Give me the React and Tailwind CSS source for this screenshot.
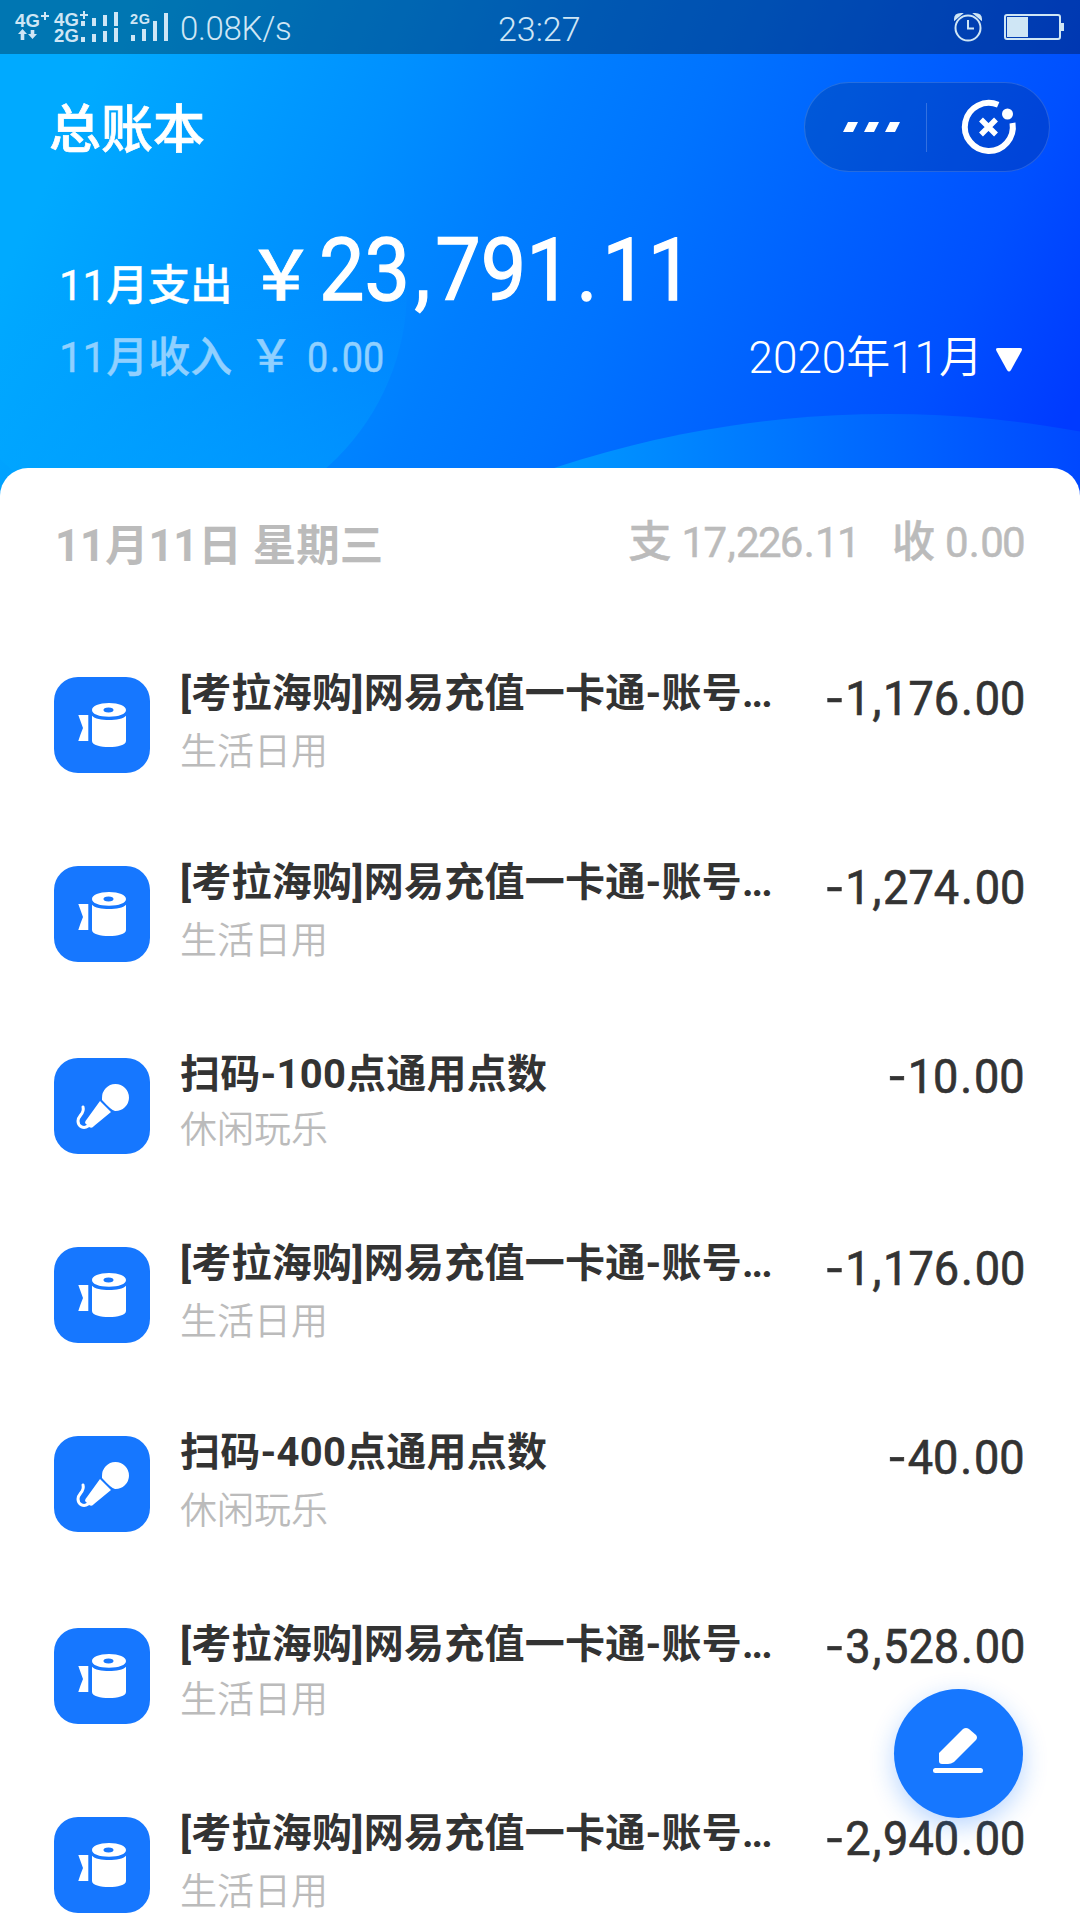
const FONTS = "font-['Roboto','Noto_Sans_CJK_SC',sans-serif]";

function Num({ value, sep }) {
  return value.split(/([,.-])/).map((p, i) => {
    if (p === "-") return <span key={i} className="mr-[3px] inline-block origin-right scale-x-[1.25]">{p}</span>;
    if (p === "," || p === ".") return <span key={i} className={sep}>{p}</span>;
    return p;
  });
}

function RollIcon() {
  return (
    <svg width="96" height="96" viewBox="0 0 96 96" fill="#fff">
      <path d="M24.300 38H34.300V64H24.300Q26.500 57 29 51Q26.500 44 24.300 38Z" />
      <path d="M38 38.700C43 44.500 67 44.500 72 38.700V64C72 72 38 72 38 64Z" />
      <path fillRule="evenodd" d="M55 26C65 26 72 29 72 33S65 39.700 55 39.700S38 37 38 33S45 26 55 26ZM54.500 30.500C51 30.500 49.500 31.500 49.500 33S51 35.500 54.500 35.500S59.500 34.500 59.500 33S58 30.500 54.500 30.500Z" />
    </svg>
  );
}

function MicIcon() {
  return (
    <svg width="96" height="96" viewBox="0 0 96 96" fill="#fff">
      <path d="M48 40A13.500 13.500 0 1 1 61 53Q58 53 48 42Z" />
      <path d="M46 43L57 54L40 68Q38 71 35 69L31 65Q31 63 33 61Z" />
      <path d="M29 49C31 56 24 57 24 63C24 69 30 71 34 68" fill="none" stroke="#fff" strokeWidth="3" strokeLinecap="round" />
    </svg>
  );
}

const KAOLA = (
  <>
    [考拉海购]网易充值一卡通-账号<span className="tracking-[-2px]">...</span>
  </>
);
const NORMAL = { sub: "mt-[9px]", amount: "mt-[-8px]" };
const TIGHT = { sub: "mt-[6px]", amount: "mt-[-11px]" };
const rows = [
  { title: KAOLA, sub: "生活日用", amount: "-1,176.00", Icon: RollIcon, h: "h-[189px]", gap: NORMAL },
  { title: KAOLA, sub: "生活日用", amount: "-1,274.00", Icon: RollIcon, h: "h-[192px]", gap: NORMAL },
  { title: "扫码-100点通用点数", sub: "休闲玩乐", amount: "-10.00", Icon: MicIcon, h: "h-[189px]", gap: TIGHT },
  { title: KAOLA, sub: "生活日用", amount: "-1,176.00", Icon: RollIcon, h: "h-[189px]", gap: NORMAL },
  { title: "扫码-400点通用点数", sub: "休闲玩乐", amount: "-40.00", Icon: MicIcon, h: "h-[192px]", gap: NORMAL },
  { title: KAOLA, sub: "生活日用", amount: "-3,528.00", Icon: RollIcon, h: "h-[189px]", gap: TIGHT },
  { title: KAOLA, sub: "生活日用", amount: "-2,940.00", Icon: RollIcon, h: "h-[189px]", gap: NORMAL },
];

function StatusBar() {
  return (
    <div className="flex h-[54px] items-center bg-black/30 text-[#cfe6f5]">
      <svg className="shrink-0" width="176" height="54" viewBox="0 0 176 54" fill="currentColor">
        <g fontFamily="Liberation Sans" fontWeight="bold">
          <text x="15" y="27" fontSize="18.500" textLength="25">4G</text>
          <text x="54" y="26" fontSize="18.500" textLength="25">4G</text>
          <text x="54" y="42" fontSize="18.500" textLength="25">2G</text>
          <text x="130" y="24" fontSize="14.500" textLength="20">2G</text>
        </g>
        <path d="M41 16h8M45 12v8M80 15h8M84 11v8" stroke="currentColor" strokeWidth="2" />
        <path d="M18 34l4.500-5l4.500 5h-2.700v6h-3.600v-6zM28 34l4.500 5l4.500-5h-2.700v-4h-3.600v4z" />
        <path d="M81 21h4v5h-4zM92 18h4v8h-4zM103 15h4v11h-4zM114 12h4v14h-4zM81 37h4v5h-4zM92 34h4v8h-4zM103 31h4v11h-4zM114 28h4v14h-4zM131 35h4v6h-4zM142 29h4v12h-4zM153 21h4v20h-4zM164 13h4v28h-4z" />
      </svg>
      <span className="w-[322px] pl-[4px] pt-[3px] text-[33px] font-light leading-[54px] tracking-[-0.3px]">0.08K/s</span>
      <span className="w-[448px] pt-[3px] text-[34px] font-light leading-[54px]">23:27</span>
      <svg className="shrink-0" width="130" height="54" viewBox="0 0 130 54" fill="none" stroke="currentColor" strokeWidth="2">
        <circle cx="22" cy="28" r="12.500" />
        <path d="M22 20v8.500h6" />
        <path d="M9 19q0-5 6-5zM35 19q0-5-6-5z" fill="currentColor" />
        <rect x="59" y="15" width="55" height="24" rx="2" />
        <path d="M61 17h21v20h-21zM115 23h3v8h-3z" fill="currentColor" stroke="none" />
      </svg>
    </div>
  );
}

export default function App() {
  return (
    <div className={`relative h-[1920px] w-[1080px] overflow-hidden bg-white ${FONTS}`}>
      <header className="relative h-[508px] bg-[linear-gradient(115deg,#00aaff_10%,#0090ff_33%,#007eff_46%,#0073ff_57%,#0050ff_84%,#003aff_96%)]">
        <svg className="absolute inset-0" width="1080" height="508" viewBox="0 0 1080 508">
          <defs>
            <linearGradient id="a" gradientUnits="userSpaceOnUse" x1="0" y1="270" x2="0" y2="468">
              <stop offset="0" stopColor="#00a8ff" stopOpacity="0" />
              <stop offset="1" stopColor="#00a8ff" stopOpacity="0.42" />
            </linearGradient>
            <linearGradient id="b" gradientUnits="userSpaceOnUse" x1="560" y1="0" x2="1080" y2="0">
              <stop offset="0" stopColor="#0098ff" />
              <stop offset="1" stopColor="#0048ff" />
            </linearGradient>
          </defs>
          <circle cx="168" cy="289" r="239" fill="url(#a)" />
          <circle cx="888" cy="1472" r="1058" fill="url(#b)" />
        </svg>
        <div className="relative">
          <StatusBar />
          <div className="flex h-[146px] items-center justify-between pl-[49px] pr-[30px]">
            <h1 className="pt-[7px] text-[52px] font-medium leading-none text-white [-webkit-text-stroke:0.7px]">总账本</h1>
            <div className="flex h-[90px] w-[246px] items-center rounded-full border border-white/15 bg-black/15">
              <svg width="244" height="88" viewBox="0 0 244 88" fill="#fff">
                <path d="M43 39h10l-5 10h-10zM64 39h10l-5 10h-10zM85 39h10l-5 10h-10z" />
                <path d="M121.500 20v49" stroke="#fff" strokeOpacity="0.2" />
                <g fill="none" stroke="#fff">
                  <path d="M193.200 21.800A24 24 0 1 0 207.500 40" strokeWidth="6" />
                  <path d="M176 36.500l15 15M191 36.500l-15 15" strokeWidth="5.500" />
                </g>
                <circle cx="202.500" cy="31" r="5.500" />
              </svg>
            </div>
          </div>
          <div className="flex h-[125px] items-baseline pl-[59px] pt-[7px] font-[450] text-white">
            <span className="w-[188px] text-[42px] leading-[142px] [-webkit-text-stroke:0.4px]">11月支出</span>
            <span className="w-[72px] text-[68px] font-medium leading-none [-webkit-text-stroke:0.8px]">￥</span>
            <span className="origin-left scale-x-[0.92] text-[88px] leading-[125px] [-webkit-text-stroke:1.300px]"><Num value="23,791.11" sep="mx-[5px]" /></span>
          </div>
          <div className="flex h-[66px] items-center justify-between pl-[59px] pr-[57px]">
            <div className="flex items-baseline font-[450] text-[#90d0ff]">
              <span className="w-[190px] text-[42px] leading-[66px] [-webkit-text-stroke:0.4px]">11月收入</span>
              <span className="w-[58px] text-[44px] font-medium leading-none [-webkit-text-stroke:0.4px]">￥</span>
              <span className="origin-left scale-x-90 text-[42px] [-webkit-text-stroke:0.5px]"><Num value="0.00" sep="mx-[2px]" /></span>
            </div>
            <div className="flex items-center text-white">
              <span className="text-[44px] font-[350] leading-[66px]">2020年11月</span>
              <svg className="ml-[12px] mt-[3px]" width="28" height="26" viewBox="0 0 28 26" fill="#fff"><path d="M3 1H25Q28 1 26.500 4L16 23Q14 26 12 23L1.500 4Q0 1 3 1Z" /></svg>
            </div>
          </div>
        </div>
      </header>
      <main className="relative mt-[-40px] h-[1452px] rounded-t-[28px] bg-white">
        <div className="flex h-[152px] items-center justify-between pl-[55px] pr-[56px] text-[#bbbbbb]">
          <span className="pt-[5px] text-[43.500px] font-bold">11月11日 星期三</span>
          <div className="mt-[-4px] flex items-baseline text-[42px] font-[450] [-webkit-text-stroke:0.5px]">
            <span className="text-[43px] font-medium">支</span>
            <span className="ml-[10px] tracking-[-1.7px]"><Num value="17,226.11" sep="mx-[2px]" /></span>
            <span className="ml-[33px] text-[43px] font-medium">收</span>
            <span className="ml-[10px] tracking-[-1.7px]"><Num value="0.00" sep="mx-[2px]" /></span>
          </div>
        </div>
        <ul className="pt-[57px]">
          {rows.map(({ title, sub, amount, Icon, h, gap }, i) => (
            <li key={i} className={`flex justify-between pl-[54px] pr-[55px] ${h}`}>
              <div className="flex">
                <div className="size-[96px] rounded-[24px] bg-[#1677ff]"><Icon /></div>
                <div className="pl-[30px]">
                  <p className="mt-[-8px] whitespace-nowrap text-[40px] font-bold leading-[50px] tracking-[0.25px] text-[#333]">{title}</p>
                  <p className={`text-[37px] font-[350] leading-[50px] text-[#bbb] ${gap.sub}`}>{sub}</p>
                </div>
              </div>
              <span className={`origin-right scale-x-[0.92] text-[49px] font-[450] leading-[60px] text-[#333] [-webkit-text-stroke:0.7px] ${gap.amount}`}><Num value={amount} sep="mx-[2px]" /></span>
            </li>
          ))}
        </ul>
      </main>
      <button className="absolute left-[894px] top-[1689px] flex size-[129px] items-center justify-center rounded-full bg-[#1677ff] shadow-[0_8px_24px_rgba(22,119,255,0.3)]">
        <svg width="129" height="129" viewBox="0 0 129 129" fill="#fff">
          <path d="M45 64L69 40Q72 38 75 40L82 46Q84 48.500 82 51L60 73Q57 75 54 75H48Q45 75 45 72Z" />
          <rect x="39" y="79" width="50" height="5" rx="2.500" />
        </svg>
      </button>
    </div>
  );
}
